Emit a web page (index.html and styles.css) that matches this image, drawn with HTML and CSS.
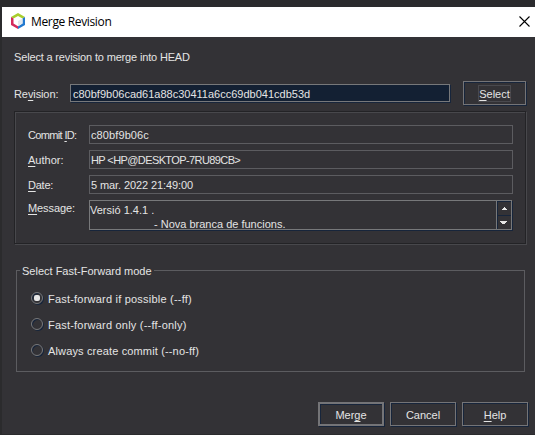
FILE: index.html
```html
<!DOCTYPE html>
<html lang="en">
<head>
<meta charset="utf-8">
<title>Merge Revision</title>
<link rel="stylesheet" href="styles.css">
</head>
<body>
<div class="dialog">
  <header class="titlebar">
    <svg class="logo" width="16" height="18" viewBox="0 0 16 18">
      <path d="M8 1 1 5l7 4 7-4z" fill="#a9ce2c"/>
      <path d="M1 5v8l7 4V9z" fill="#d32a5c"/>
      <path d="M15 5v8l-7 4V9z" fill="#2279cf"/>
      <path d="M8 4 3.5 6.6v5L8 14.2l4.5-2.6v-5z" fill="#fff"/>
      <path d="M8 9v5.2l4.5-2.6v-5z" fill="#e3e8ee"/>
    </svg>
    <span class="title">Merge Revision</span>
    <svg class="close" width="11" height="11" viewBox="0 0 11 11"><path d="M.5.5l10 10M10.5.5l-10 10" stroke="#000" stroke-width="1.1"/></svg>
  </header>
  <main class="content">
    <p class="intro">Select a revision to merge into HEAD</p>
    <div class="revision">
      <label class="revision-label">Re<u>v</u>ision:</label>
      <div class="revision-input">c80bf9b06cad61a88c30411a6cc69db041cdb53d</div>
      <div class="button select"><span class="focus"><u>S</u>elect</span></div>
    </div>
    <section class="details">
      <label class="commit-label">Commit <u>I</u>D:</label><div class="field commit">c80bf9b06c</div>
      <label><u>A</u>uthor:</label><div class="field author">HP &lt;HP@DESKTOP-7RU89CB&gt;</div>
      <label class="date-label"><u>D</u>ate:</label><div class="field date">5 mar. 2022 21:49:00</div>
      <label class="message-label"><u>M</u>essage:</label>
      <div class="message">
        <div class="message-text"><div>Versió 1.4.1 .</div><div class="indented">- Nova branca de funcions.</div></div>
        <div class="scrollbar">
          <div class="arrow"><svg width="7" height="3" shape-rendering="crispEdges"><path d="M3 0h1v1h1v1h1v1H1V2h1V1h1z" fill="#e6e6e6"/></svg></div>
          <div class="arrow down"><svg width="7" height="3" shape-rendering="crispEdges"><path d="M0 0h7v1H6v1H5v1H2V2H1V1H0z" fill="#e6e6e6"/></svg></div>
        </div>
      </div>
    </section>
    <section class="modes">
      <div class="legend"><span>Select Fast-Forward mode</span></div>
      <div class="mode"><i class="radio checked"></i><span>Fast-forward if possible (--ff)</span></div>
      <div class="mode"><i class="radio"></i><span>Fast-forward only (--ff-only)</span></div>
      <div class="mode always"><i class="radio"></i><span>Always create commit (--no-ff)</span></div>
    </section>
    <footer class="actions">
      <div class="button primary"><span>Mer<u>g</u>e</span></div>
      <div class="button"><span>Cancel</span></div>
      <div class="button"><span><u>H</u>elp</span></div>
    </footer>
  </main>
</div>
</body>
</html>
```
FILE: styles.css
```css
* { box-sizing: border-box; }
body {
  margin: 0;
  width: 535px;
  height: 435px;
  overflow: hidden;
  padding: 7px 0 1px 2px;
  background: #2b2b2d;
  color: #e4e4e4;
  font: 11px/13px "Liberation Sans", Arial, sans-serif;
  white-space: nowrap;
}
u { text-decoration: underline; text-underline-offset: 2px; text-decoration-thickness: 1px; text-decoration-skip-ink: none; }
svg { display: block; }
.dialog { height: 427px; background: #333236; }
.titlebar { display: flex; align-items: center; height: 30px; background: #fff; color: #000; padding: 0 5px 0 8px; }
.logo { margin-bottom: 2px; }
.title { margin-left: 5px; font: 12px/16px "Open Sans", "Noto Sans", sans-serif; letter-spacing: -0.35px; }
.close { margin-left: auto; margin-bottom: 2px; }
.content { padding: 14px 0 0 12px; }
.intro { margin: 0; letter-spacing: -0.16px; }
.revision { display: flex; align-items: center; height: 24px; margin-top: 17px; }
.revision-label { width: 56px; padding-top: 2px; letter-spacing: -0.1px; }
.revision-input {
  width: 380px;
  height: 18px;
  padding: 3px 0 0 2px;
  margin-right: 13px;
  line-height: 12px;
  background: #132033;
  border: 1px solid #77787a;
  box-shadow: 1px 1px 0 #17253b;
}
.button {
  display: flex;
  align-items: center;
  justify-content: center;
  width: 66px;
  height: 24px;
  padding-top: 2px;
  border: 1px solid #747477;
  box-shadow: 1px 1px 0 #17253b, inset 1px 1px 0 #17253b;
}
.button.select { width: 63px; padding: 0; }
.focus { height: 17px; padding: 2px 0 0; border: 1px solid #49494e; }
.button.primary { border-width: 2px; }
.details {
  display: grid;
  grid-template-columns: 61px 424px;
  grid-template-rows: 19px 19px 19px 30px;
  row-gap: 6px;
  width: 512px;
  height: 133px;
  margin-top: 6px;
  padding: 13px 0 0 13px;
  border: 1px solid #232326;
  box-shadow: 1px 1px 0 #48484c, inset 1px 1px 0 #48484c;
}
.details label { padding-top: 4px; }
.details .message-label { padding-top: 2px; letter-spacing: -0.1px; }
.commit-label { letter-spacing: -0.65px; }
.date-label { letter-spacing: -0.25px; }
.field { padding: 3px 0 0 1px; border: 1px solid #5c5c60; }
.commit { letter-spacing: 0.1px; }
.author { letter-spacing: -0.6px; }
.date { letter-spacing: -0.1px; }
.message {
  display: flex;
  width: 423px;
  height: 30px;
  overflow: hidden;
  border: 1px solid #77787a;
  box-shadow: 1px 1px 0 #17253b;
}
.message-text { flex: 1; padding-top: 2px; line-height: 14px; }
.indented { margin-left: 64px; }
.scrollbar { width: 15px; border-left: 1px solid #77787a; }
.arrow { height: 14px; padding: 5px 0 0 3px; border: solid #17253b; border-width: 1px 0 0 1px; }
.arrow.down { padding-left: 2px; }
.modes { width: 509px; height: 102px; margin: 26px 0 0 2px; border: 1px solid #5c5c60; }
.legend { height: 13px; margin: -6px 0 0 3px; }
.legend span { display: inline-block; padding: 0 2px; background: #333236; }
.mode { display: flex; align-items: center; height: 13px; margin: 14px 0 0 14px; letter-spacing: 0.21px; }
.mode + .mode { margin-top: 13px; }
.mode.always { letter-spacing: 0.15px; }
.mode span { padding-top: 2px; }
.radio { width: 12px; height: 12px; margin: -1px 5px 0 0; border: 1px solid #77787a; border-radius: 50%; box-shadow: inset 1px 1px 0 #17253b, 1px 1px 0 #17253b; }
.radio.checked { padding: 2px; }
.radio.checked::before { content: ""; display: block; width: 6px; height: 6px; border-radius: 2px; background: #e6e6e6; }
.actions { display: flex; gap: 6px; margin: 30px 0 0 304px; }
```
